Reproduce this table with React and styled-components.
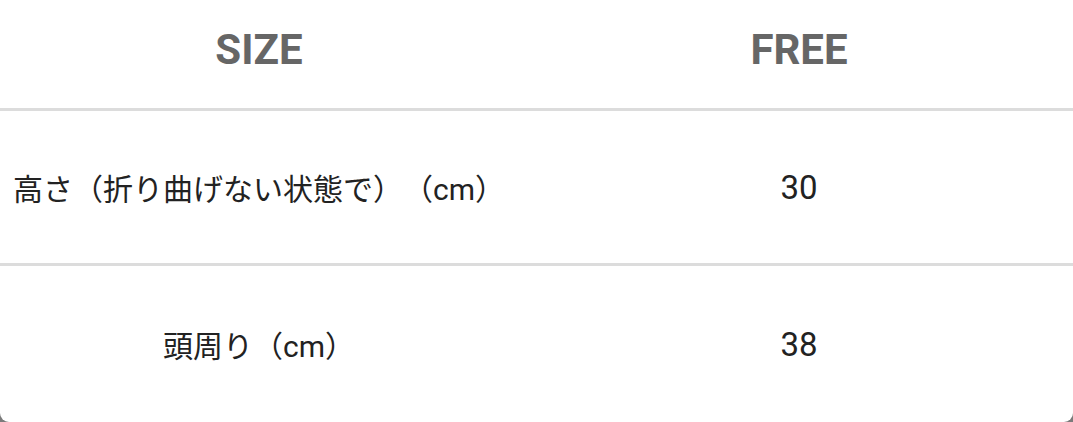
import React from "react";
import styled, { createGlobalStyle } from "styled-components";

const GlobalStyle = createGlobalStyle`
  html, body {
    margin: 0;
    padding: 0;
    background: #7b7b7b;
  }
`;

const Sheet = styled.div`
  width: 1073px;
  height: 422px;
  background: #ffffff;
  border-radius: 0 0 9px 9px;
  overflow: hidden;
  display: grid;
  grid-template-columns: 518px 1fr;
  grid-template-rows: 111px 155px 156px;
  font-family: Roboto, "Noto Sans CJK JP", sans-serif;
  text-spacing-trim: space-all;
`;

const Cell = styled.div`
  display: flex;
  align-items: center;
  justify-content: center;
  padding-left: ${(p) => (p.$value ? "7px" : "0")};
  padding-bottom: ${(p) => (p.$head ? "10px" : "0")};
  border-bottom: ${(p) => (p.$last ? "none" : "3px solid #dcdcdc")};
  color: ${(p) => (p.$head ? "#666666" : "#222222")};
  font-size: ${(p) => (p.$head ? "42px" : p.$value ? "33px" : "30px")};
  font-weight: ${(p) => (p.$head ? 700 : 400)};
  white-space: nowrap;
`;

const rows = [
  { label: "高さ（折り曲げない状態で）（cm）", value: "30" },
  { label: "頭周り（cm）", value: "38" },
];

const App = () => {
  return (
    <>
      <GlobalStyle />
      <Sheet>
        <Cell $head>SIZE</Cell>
        <Cell $head $value>
          FREE
        </Cell>
        {rows.map((r, i) => (
          <React.Fragment key={r.label}>
            <Cell $last={i === rows.length - 1}>{r.label}</Cell>
            <Cell $value $last={i === rows.length - 1}>
              {r.value}
            </Cell>
          </React.Fragment>
        ))}
      </Sheet>
    </>
  );
};

export default App;
